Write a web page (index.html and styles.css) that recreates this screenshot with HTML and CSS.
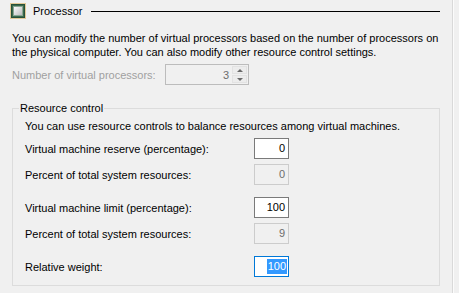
FILE: index.html
```html
<!DOCTYPE html>
<html lang="en">

<head>
    <meta charset="UTF-8">
    <meta name="viewport" content="width=device-width, initial-scale=1.0">
    <title>Processor</title>
    <link rel="stylesheet" href="styles.css">
</head>

<body>
    <div class="page">
        <div class="panel">
            <div class="section-head">
                <svg class="chip" width="16" height="16" viewBox="0 0 16 16">
                    <defs>
                        <linearGradient id="die" x1="0" y1="0" x2="1" y2="1">
                            <stop offset="0" stop-color="#ffffff" />
                            <stop offset="1" stop-color="#b8b8b8" />
                        </linearGradient>
                    </defs>
                    <rect x="0.5" y="0.5" width="15" height="15" fill="none" stroke="#d4a23c" stroke-dasharray="1 1" />
                    <rect x="1" y="1" width="14" height="14" fill="#3b6b4c" />
                    <rect x="1.5" y="1.5" width="13" height="13" fill="none" stroke="#27503a" />
                    <rect x="3.5" y="3.5" width="9" height="9" fill="url(#die)" stroke="#8aa593" />
                </svg>
                <span class="section-title">Processor</span>
                <span class="section-rule"></span>
            </div>

            <p class="intro">You can modify the number of virtual processors based on the number of processors on
                the physical computer. You can also modify other resource control settings.</p>

            <div class="proc-row">
                <span class="proc-label">Number of virtual processors:</span>
                <div class="spinner">
                    <span class="spin-value">3</span>
                    <div class="spin-buttons">
                        <span class="spin-btn"><span class="arrow-up"></span></span>
                        <span class="spin-btn"><span class="arrow-down"></span></span>
                    </div>
                </div>
            </div>

            <fieldset class="group">
                <legend>Resource control</legend>
                <p class="group-note">You can use resource controls to balance resources among virtual machines.</p>

                <div class="field-row">
                    <span class="field-label">Virtual machine reserve (percentage):</span>
                    <div class="box">0</div>
                </div>
                <div class="field-row">
                    <span class="field-label">Percent of total system resources:</span>
                    <div class="box box-disabled">0</div>
                </div>
                <div class="field-row spaced">
                    <span class="field-label">Virtual machine limit (percentage):</span>
                    <div class="box">100</div>
                </div>
                <div class="field-row">
                    <span class="field-label">Percent of total system resources:</span>
                    <div class="box box-disabled">9</div>
                </div>
                <div class="field-row spaced">
                    <span class="field-label">Relative weight:</span>
                    <div class="box box-focus"><span class="selected">100</span></div>
                </div>
            </fieldset>
        </div>
        <div class="edge"></div>
    </div>
</body>

</html>
```

FILE: styles.css
```css
body {
    margin: 0;
    font-family: 'Liberation Sans', Arial, sans-serif;
    font-size: 11px;
    color: #000;
    background-color: #f0f0f0;
}

.page {
    display: flex;
    height: 293px;
}

.panel {
    width: 428px;
    padding: 0 12px;
}

.section-head {
    display: flex;
    align-items: center;
    height: 16px;
    margin: 3px 0 0 -2px;
}

.chip {
    flex: none;
    display: block;
}

.section-title {
    margin-left: 7px;
    line-height: 16px;
}

.section-rule {
    flex: 1;
    align-self: flex-start;
    height: 1px;
    margin: 8px 0 0 8px;
    background-color: #000;
}

.intro {
    margin: 12px 0 0;
    line-height: 14px;
}

.proc-row {
    display: flex;
    align-items: center;
    height: 21px;
    margin-top: 5px;
}

.proc-label {
    flex: none;
    width: 153px;
    white-space: nowrap;
    color: #a0a0a0;
}

.spinner {
    display: flex;
    align-items: center;
    justify-content: flex-end;
    box-sizing: border-box;
    width: 84px;
    height: 21px;
    border: 1px solid #bcbcbc;
    padding: 1px 1px 1px 0;
}

.spin-value {
    color: #6d6d6d;
    margin-right: 3px;
}

.spin-buttons {
    display: flex;
    flex-direction: column;
    gap: 1px;
    width: 15px;
    height: 17px;
}

.spin-btn {
    flex: 1;
    display: flex;
    align-items: center;
    justify-content: center;
    background-color: #ececec;
    border: 1px solid #e2e2e2;
}

.arrow-up,
.arrow-down {
    width: 0;
    height: 0;
    border-left: 3px solid transparent;
    border-right: 3px solid transparent;
}

.arrow-up {
    border-bottom: 3px solid #6a6a6a;
}

.arrow-down {
    border-top: 3px solid #6a6a6a;
}

.group {
    margin: 16px 0 0;
    padding: 0 0 8px 12px;
    border: 1px solid #dcdcdc;
    min-width: 0;
}

.group legend {
    margin-left: -6px;
    padding: 0 1px;
    line-height: 14px;
}

.group-note {
    margin: 4px 0 0;
    line-height: 14px;
}

.field-row {
    display: flex;
    align-items: center;
    height: 21px;
    margin-top: 5px;
}

.field-row.spaced {
    margin-top: 12px;
}

.field-label {
    flex: none;
    width: 229px;
}

.box {
    box-sizing: border-box;
    width: 35px;
    height: 21px;
    padding-right: 3px;
    line-height: 19px;
    text-align: right;
    background-color: #fff;
    border: 1px solid #7a7a7a;
}

.box-disabled {
    background-color: #f0f0f0;
    border-color: #cccccc;
    color: #6d6d6d;
}

.box-focus {
    border-color: #0078d7;
}

.selected {
    display: inline-block;
    line-height: 15px;
    padding: 0 1px;
    margin-right: -2px;
    color: #fff;
    background-color: #3399ff;
}

.edge {
    flex: none;
    width: 6px;
    border-left: 1px solid #d9d9d9;
    box-shadow: inset 1px 0 #fbfbfb;
}
```
